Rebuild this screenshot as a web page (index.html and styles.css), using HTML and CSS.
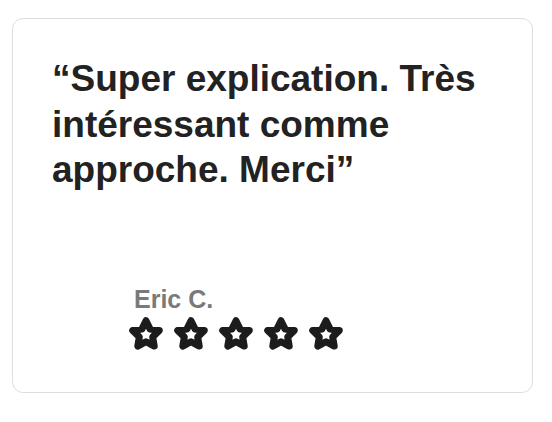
FILE: index.html
```html
<!DOCTYPE html>
<html lang="fr">
<head>
  <meta charset="UTF-8">
  <meta name="viewport" content="width=device-width, initial-scale=1">
  <title>Témoignage</title>
  <link rel="stylesheet" href="styles.css">
</head>
<body>

<div class="card">
  <p class="quote">“Super explication. Très intéressant comme approche. Merci”</p>

  <div class="author">
    <div class="name">Eric C.</div>
    <div class="stars">
      <svg class="star" viewBox="0 0 24 24"><path d="M12 3.6l2.6 5.3 5.8.85-4.2 4.1 1 5.8L12 16.9l-5.2 2.75 1-5.8-4.2-4.1 5.8-.85z"/></svg>
      <svg class="star" viewBox="0 0 24 24"><path d="M12 3.6l2.6 5.3 5.8.85-4.2 4.1 1 5.8L12 16.9l-5.2 2.75 1-5.8-4.2-4.1 5.8-.85z"/></svg>
      <svg class="star" viewBox="0 0 24 24"><path d="M12 3.6l2.6 5.3 5.8.85-4.2 4.1 1 5.8L12 16.9l-5.2 2.75 1-5.8-4.2-4.1 5.8-.85z"/></svg>
      <svg class="star" viewBox="0 0 24 24"><path d="M12 3.6l2.6 5.3 5.8.85-4.2 4.1 1 5.8L12 16.9l-5.2 2.75 1-5.8-4.2-4.1 5.8-.85z"/></svg>
      <svg class="star" viewBox="0 0 24 24"><path d="M12 3.6l2.6 5.3 5.8.85-4.2 4.1 1 5.8L12 16.9l-5.2 2.75 1-5.8-4.2-4.1 5.8-.85z"/></svg>
    </div>
  </div>
</div>

</body>
</html>
```

FILE: styles.css
```css
body {
  font-family: "Liberation Sans", Arial, sans-serif;
  background: #fff;
  margin: 0;
  padding: 18px 0 0 12px;
}
.card {
  box-sizing: border-box;
  width: 521px;
  height: 375px;
  border: 1.5px solid #dedede;
  border-radius: 11px;
  padding: 37px 40px 40px 39px;
}
.quote {
  margin: 0;
  font-size: 37px;
  line-height: 45.5px;
  font-weight: 700;
  color: #222;
}
.author {
  margin-top: 92px;
  margin-left: 75px;
}
.name {
  margin-left: 7px;
  font-size: 25px;
  line-height: 28px;
  font-weight: 700;
  color: #7a7a7a;
}
.stars {
  display: flex;
  gap: 7px;
  margin-top: 2px;
}
.star {
  width: 38px;
  height: 38px;
  fill: none;
  stroke: #1c1c1c;
  stroke-width: 4.4;
  stroke-linejoin: round;
}
```
